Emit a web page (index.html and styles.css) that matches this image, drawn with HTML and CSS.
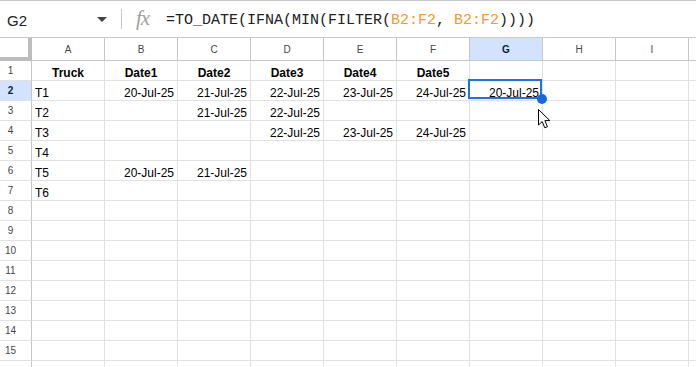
FILE: index.html
```html
<!DOCTYPE html>
<html>
<head>
<meta charset="utf-8">
<link rel="stylesheet" href="styles.css">
</head>
<body>
<div class="fbar">
  <div class="namebox">G2</div>
  <svg class="caret" width="10" height="5" viewBox="0 0 10 5"><path d="M0 0 L10 0 L5 5 Z" fill="#444"/></svg>
  <div class="sep"></div>
  <div class="fx">fx</div>
  <div class="formula">=TO_DATE(IFNA(MIN(FILTER(<span class="rng">B2:F2</span>, <span class="rng">B2:F2</span>))))</div>
</div>
<div class="grid">
  <div class="row hrow">
    <div class="corner"></div><div>A</div><div>B</div><div>C</div><div>D</div><div>E</div><div>F</div><div class="on">G</div><div>H</div><div>I</div><div></div>
  </div>
  <div class="row">
    <div class="rh">1</div><div class="c h">Truck</div><div class="c h">Date1</div><div class="c h">Date2</div><div class="c h">Date3</div><div class="c h">Date4</div><div class="c h">Date5</div><div class="c"></div><div class="c"></div><div class="c"></div><div class="c"></div>
  </div>
  <div class="row">
    <div class="rh on">2</div><div class="c">T1</div><div class="c n">20-Jul-25</div><div class="c n">21-Jul-25</div><div class="c n">22-Jul-25</div><div class="c n">23-Jul-25</div><div class="c n">24-Jul-25</div><div class="c n">20-Jul-25</div><div class="c"></div><div class="c"></div><div class="c"></div>
  </div>
  <div class="row">
    <div class="rh">3</div><div class="c">T2</div><div class="c"></div><div class="c n">21-Jul-25</div><div class="c n">22-Jul-25</div><div class="c"></div><div class="c"></div><div class="c"></div><div class="c"></div><div class="c"></div><div class="c"></div>
  </div>
  <div class="row">
    <div class="rh">4</div><div class="c">T3</div><div class="c"></div><div class="c"></div><div class="c n">22-Jul-25</div><div class="c n">23-Jul-25</div><div class="c n">24-Jul-25</div><div class="c"></div><div class="c"></div><div class="c"></div><div class="c"></div>
  </div>
  <div class="row">
    <div class="rh">5</div><div class="c">T4</div><div class="c"></div><div class="c"></div><div class="c"></div><div class="c"></div><div class="c"></div><div class="c"></div><div class="c"></div><div class="c"></div><div class="c"></div>
  </div>
  <div class="row">
    <div class="rh">6</div><div class="c">T5</div><div class="c n">20-Jul-25</div><div class="c n">21-Jul-25</div><div class="c"></div><div class="c"></div><div class="c"></div><div class="c"></div><div class="c"></div><div class="c"></div><div class="c"></div>
  </div>
  <div class="row">
    <div class="rh">7</div><div class="c">T6</div><div class="c"></div><div class="c"></div><div class="c"></div><div class="c"></div><div class="c"></div><div class="c"></div><div class="c"></div><div class="c"></div><div class="c"></div>
  </div>
  <div class="row">
    <div class="rh">8</div><div class="c"></div><div class="c"></div><div class="c"></div><div class="c"></div><div class="c"></div><div class="c"></div><div class="c"></div><div class="c"></div><div class="c"></div><div class="c"></div>
  </div>
  <div class="row">
    <div class="rh">9</div><div class="c"></div><div class="c"></div><div class="c"></div><div class="c"></div><div class="c"></div><div class="c"></div><div class="c"></div><div class="c"></div><div class="c"></div><div class="c"></div>
  </div>
  <div class="row">
    <div class="rh">10</div><div class="c"></div><div class="c"></div><div class="c"></div><div class="c"></div><div class="c"></div><div class="c"></div><div class="c"></div><div class="c"></div><div class="c"></div><div class="c"></div>
  </div>
  <div class="row">
    <div class="rh">11</div><div class="c"></div><div class="c"></div><div class="c"></div><div class="c"></div><div class="c"></div><div class="c"></div><div class="c"></div><div class="c"></div><div class="c"></div><div class="c"></div>
  </div>
  <div class="row">
    <div class="rh">12</div><div class="c"></div><div class="c"></div><div class="c"></div><div class="c"></div><div class="c"></div><div class="c"></div><div class="c"></div><div class="c"></div><div class="c"></div><div class="c"></div>
  </div>
  <div class="row">
    <div class="rh">13</div><div class="c"></div><div class="c"></div><div class="c"></div><div class="c"></div><div class="c"></div><div class="c"></div><div class="c"></div><div class="c"></div><div class="c"></div><div class="c"></div>
  </div>
  <div class="row">
    <div class="rh">14</div><div class="c"></div><div class="c"></div><div class="c"></div><div class="c"></div><div class="c"></div><div class="c"></div><div class="c"></div><div class="c"></div><div class="c"></div><div class="c"></div>
  </div>
  <div class="row">
    <div class="rh">15</div><div class="c"></div><div class="c"></div><div class="c"></div><div class="c"></div><div class="c"></div><div class="c"></div><div class="c"></div><div class="c"></div><div class="c"></div><div class="c"></div>
  </div>
  <div class="row">
    <div class="rh"></div><div class="c"></div><div class="c"></div><div class="c"></div><div class="c"></div><div class="c"></div><div class="c"></div><div class="c"></div><div class="c"></div><div class="c"></div><div class="c"></div>
  </div>

  <div class="selection"></div>
  <div class="handle"></div>
  <svg class="cursor" width="14" height="21" viewBox="0 0 14 21"><path d="M0.5 0.5 L0.5 16 L4.2 12.6 L6.8 18.8 L9.4 17.7 L6.9 11.6 L11.8 11.6 Z" fill="#fff" stroke="#000" stroke-width="1" stroke-linejoin="round"/></svg>
</div>
</body>
</html>
```
FILE: styles.css
```css
html, body {
  margin: 0;
  padding: 0;
}
body {
  width: 696px;
  height: 367px;
  overflow: hidden;
  background: #fff;
  font-family: "Liberation Sans", Arial, sans-serif;
}

/* formula bar */
.fbar {
  height: 38px;
  box-sizing: border-box;
  border-top: 1px solid #c7c7c7;
  border-bottom: 1px solid #c7c7c7;
  display: flex;
  align-items: center;
  padding-top: 3px;
}
.namebox {
  width: 97px;
  box-sizing: border-box;
  padding-left: 7px;
  font-size: 15px;
  color: #202124;
}
.caret {
  display: block;
  width: 10px;
  height: 5px;
  margin-top: -2px;
}
.sep {
  width: 1px;
  height: 20px;
  background: #c7c7c7;
  margin-left: 14px;
  margin-top: -4px;
}
.fx {
  margin-left: 14px;
  width: 30px;
  font-family: "Liberation Serif", serif;
  font-style: italic;
  font-size: 21px;
  color: #a0a0a0;
  margin-top: -5px;
  letter-spacing: -1px;
}
.formula {
  font-family: "Liberation Mono", "DejaVu Sans Mono", monospace;
  font-size: 15px;
  color: #202124;
  white-space: nowrap;
}
.rng {
  color: #f29d2a;
}

/* grid */
.grid {
  position: relative;
}
.row {
  display: grid;
  grid-template-columns: 32px repeat(9, 73px) 1fr;
  height: 20px;
}
.row > div {
  box-sizing: border-box;
  border-right: 1px solid #e1e1e1;
  border-bottom: 1px solid #e1e1e1;
  overflow: hidden;
  white-space: nowrap;
}
.row > div:last-child {
  border-right: none;
}
.hrow {
  height: 23px;
}
.hrow > div {
  border-color: #c4c7c5;
  display: flex;
  align-items: center;
  justify-content: center;
  font-size: 10px;
  color: #444746;
}
.row > .corner {
  border-right: 4px solid #bdbdbd;
  border-bottom: 4px solid #bdbdbd;
}
.hrow > .on {
  background: #d3e3fd;
  color: #041e49;
  font-weight: bold;
}
.row > .rh {
  border-right-color: #c4c7c5;
  display: flex;
  align-items: center;
  justify-content: center;
  padding-right: 10px;
  font-size: 10px;
  color: #444746;
}
.row > .rh.on {
  background: #d3e3fd;
  color: #041e49;
  font-weight: bold;
}
.c {
  display: flex;
  align-items: flex-end;
  padding: 0 3px;
  font-size: 12px;
  line-height: 14px;
  color: #000;
}
.n {
  justify-content: flex-end;
}
.h {
  justify-content: center;
  font-weight: bold;
}

/* overlays */
.selection {
  position: absolute;
  left: 468px;
  top: 41px;
  width: 74px;
  height: 20px;
  box-sizing: border-box;
  border: 2px solid #1a73e8;
}
.handle {
  position: absolute;
  left: 537px;
  top: 56px;
  width: 10px;
  height: 10px;
  border-radius: 50%;
  background: #1a68e0;
}
.cursor {
  position: absolute;
  left: 538px;
  top: 71px;
}
```
